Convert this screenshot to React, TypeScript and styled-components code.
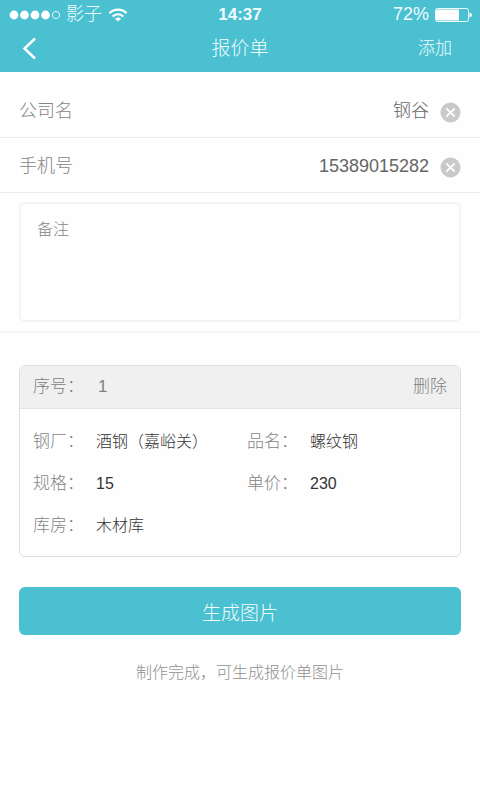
import React, { useState } from "react";
import styled, { createGlobalStyle } from "styled-components";

const teal = "#4bc0d1";

const GlobalStyle = createGlobalStyle`
  * { box-sizing: border-box; }
  body {
    margin: 0;
    background: #fefefe;
    font-family: "Liberation Sans", "Noto Sans CJK SC", sans-serif;
    font-weight: 300;
    color: #666;
  }
  button, input, textarea { font: inherit; color: inherit; }
  button { border: 0; padding: 0; background: none; cursor: pointer; }
`;

const Page = styled.div`
  width: 100%;
`;

const Header = styled.header`
  background: ${teal};
  color: #effcff;
`;

const StatusBar = styled.div`
  display: grid;
  grid-template-columns: 1fr auto 1fr;
  align-items: center;
  height: 29px;
  padding: 0 8px;
`;

const StatusGroup = styled.div<{ $end?: boolean }>`
  display: flex;
  align-items: center;
  justify-content: ${(p) => (p.$end ? "flex-end" : "flex-start")};
  gap: 6px;
  font-size: 18px;
  line-height: 29px;
`;

const Clock = styled.time`
  font-size: 17px;
  font-weight: 700;
  line-height: 29px;
`;

const NavBar = styled.nav`
  display: grid;
  grid-template-columns: 1fr auto 1fr;
  align-items: center;
  height: 43px;
  padding: 0 20px 4px;
`;

const BackButton = styled.button`
  display: flex;
  justify-self: start;
`;

const Title = styled.h1`
  margin: 0;
  font-size: 19px;
  font-weight: 300;
  line-height: 40px;
`;

const AddButton = styled.button`
  justify-self: end;
  padding: 0 8px;
  font-size: 17px;
  line-height: 40px;
`;

const Form = styled.form`
  padding-top: 11px;
`;

const FieldRow = styled.div`
  display: flex;
  align-items: flex-end;
  gap: 11px;
  height: 55px;
  padding: 0 19px 14px;
  border-bottom: 1px solid #ececec;
`;

const FieldLabel = styled.label`
  color: #858585;
  font-size: 18px;
  line-height: 24px;
`;

const FieldInput = styled.input`
  flex: 1;
  min-width: 0;
  height: 24px;
  border: 0;
  padding: 0;
  background: none;
  font-size: 18px;
  line-height: 24px;
  text-align: right;
  outline: none;
`;

const ClearButton = styled.button`
  display: flex;
`;

const RemarkSection = styled.div`
  padding: 9px 19px;
  border-bottom: 2px solid #f4f4f4;
`;

const Remark = styled.textarea`
  display: block;
  width: 100%;
  height: 120px;
  border: 2px solid #f4f4f4;
  border-radius: 6px;
  padding: 14px 16px;
  background: none;
  font-size: 16px;
  line-height: 24px;
  resize: none;
  outline: none;
  &::placeholder { color: #858585; opacity: 1; }
`;

const Card = styled.section`
  margin: 32px 19px 0;
  border: 1px solid #dfdfdf;
  border-radius: 6px;
  overflow: hidden;
`;

const CardHeader = styled.header`
  display: flex;
  align-items: center;
  justify-content: space-between;
  height: 43px;
  padding: 0 13px;
  background: #f0f0f0;
  border-bottom: 1px solid #e4e4e4;
  color: #808080;
  font-size: 17px;
  line-height: 42px;
`;

const Serial = styled.div`
  display: grid;
  grid-template-columns: 65px auto;
  align-items: baseline;
`;

const Details = styled.dl`
  display: grid;
  grid-template-columns: 214fr 200fr;
  margin: 0;
  padding: 12px 13px 9px;
`;

const Detail = styled.div`
  display: grid;
  grid-template-columns: 63px 1fr;
  align-items: baseline;
  font-size: 17px;
  line-height: 42px;
`;

const Term = styled.dt`
  color: #858585;
  white-space: nowrap;
`;

const Value = styled.dd`
  margin: 0;
  color: #333;
  font-size: 16px;
  white-space: nowrap;
`;

const Actions = styled.div`
  padding: 30px 19px;
  text-align: center;
`;

const SubmitButton = styled.button`
  width: 100%;
  height: 48px;
  border-radius: 6px;
  background: ${teal};
  color: #effcff;
  font-size: 19px;
`;

const Note = styled.p`
  margin: 26px 0 0;
  color: #909090;
  font-size: 16px;
  line-height: 24px;
`;

const Signal = () => (
  <svg width="52" height="10" viewBox="0 0 52 10" aria-hidden="true">
    {[6, 16.5, 27, 37.5].map((x) => (
      <circle key={x} cx={x} cy="5" r="4.4" fill="#fff" />
    ))}
    <circle cx="48" cy="5" r="3.6" fill="none" stroke="#dff8fc" strokeWidth="1" />
  </svg>
);

const Wifi = () => (
  <svg width="20" height="14" viewBox="0 0 20 14" aria-hidden="true">
    <g fill="none" stroke="#fff" strokeWidth="2.2">
      <path d="M1.4 5.2A12.2 12.2 0 0 1 18.6 5.2" />
      <path d="M4.6 8.5A7.6 7.6 0 0 1 15.4 8.5" />
    </g>
    <path d="M7 10.7A4.2 4.2 0 0 1 13 10.7L10 13.6Z" fill="#fff" />
  </svg>
);

const Battery = () => (
  <svg width="37" height="14" viewBox="0 0 37 14" aria-hidden="true">
    <rect x="0.5" y="0.5" width="33" height="13" rx="2" fill="none" stroke="#effcff" />
    <rect x="1" y="1.5" width="23" height="11" rx="1" fill="#fff" />
    <path d="M34.5 4.5Q37 5.2 37 7Q37 8.8 34.5 9.5Z" fill="#fff" />
  </svg>
);

const BackIcon = () => (
  <svg width="18" height="24" viewBox="0 0 18 24" aria-hidden="true">
    <path d="M15 1.5L4.5 11.5L15 21.5" fill="none" stroke="#fff" strokeWidth="2.5" />
  </svg>
);

const ClearIcon = () => (
  <svg width="21" height="21" viewBox="0 0 21 21" aria-hidden="true">
    <circle cx="10.5" cy="10.5" r="10" fill="#c9c9c9" />
    <path d="M6.3 6.3L14.7 14.7M14.7 6.3L6.3 14.7" stroke="#fff" strokeWidth="1.8" />
  </svg>
);

type FieldProps = { id: string; label: string; initial: string; type?: string };

const Field = ({ id, label, initial, type = "text" }: FieldProps) => {
  const [value, setValue] = useState(initial);
  return (
    <FieldRow>
      <FieldLabel htmlFor={id}>{label}</FieldLabel>
      <FieldInput id={id} type={type} value={value} onChange={(e) => setValue(e.target.value)} />
      <ClearButton type="button" aria-label={`清除${label}`} onClick={() => setValue("")}>
        <ClearIcon />
      </ClearButton>
    </FieldRow>
  );
};

const details = [
  ["钢厂：", "酒钢（嘉峪关）"],
  ["品名：", "螺纹钢"],
  ["规格：", "15"],
  ["单价：", "230"],
  ["库房：", "木材库"],
];

export default function App() {
  return (
    <Page lang="zh-CN">
      <GlobalStyle />
      <Header>
        <StatusBar>
          <StatusGroup>
            <Signal />
            <span>影子</span>
            <Wifi />
          </StatusGroup>
          <Clock>14:37</Clock>
          <StatusGroup $end>
            <span>72%</span>
            <Battery />
          </StatusGroup>
        </StatusBar>
        <NavBar>
          <BackButton type="button" aria-label="返回">
            <BackIcon />
          </BackButton>
          <Title>报价单</Title>
          <AddButton type="button">添加</AddButton>
        </NavBar>
      </Header>
      <Form onSubmit={(e) => e.preventDefault()}>
        <Field id="company" label="公司名" initial="钢谷" />
        <Field id="phone" label="手机号" initial="15389015282" type="tel" />
        <RemarkSection>
          <Remark aria-label="备注" placeholder="备注" />
        </RemarkSection>
        <Card>
          <CardHeader>
            <Serial>
              <span>序号：</span>
              <span>1</span>
            </Serial>
            <button type="button">删除</button>
          </CardHeader>
          <Details>
            {details.map(([term, value]) => (
              <Detail key={term}>
                <Term>{term}</Term>
                <Value>{value}</Value>
              </Detail>
            ))}
          </Details>
        </Card>
        <Actions>
          <SubmitButton type="submit">生成图片</SubmitButton>
          <Note>制作完成，可生成报价单图片</Note>
        </Actions>
      </Form>
    </Page>
  );
}
